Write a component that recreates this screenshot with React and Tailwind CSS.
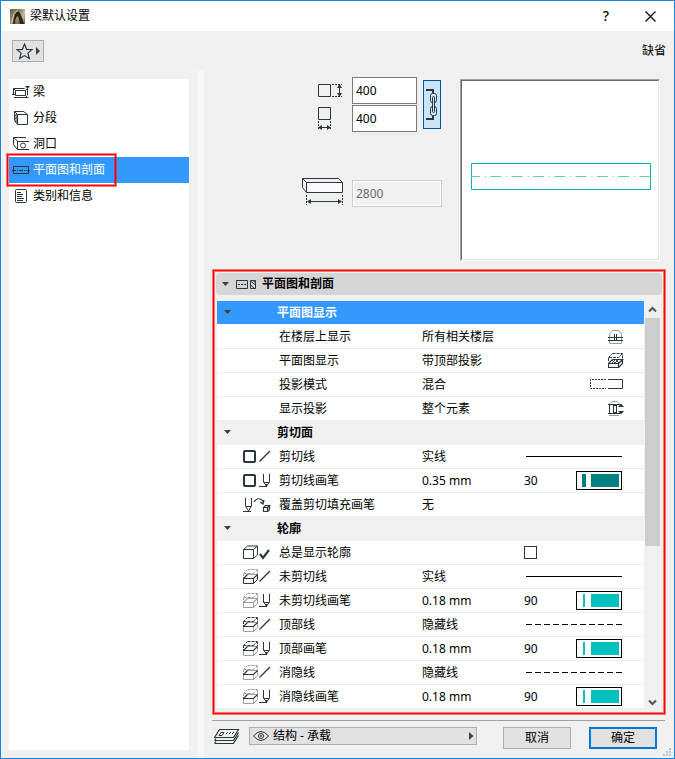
import React, { useState } from 'react'

const INK = '#2b363d'
const GREY = '#9a9fa3'

function Svg({ w, h, children, className = '' }) {
  return (
    <svg width={w} height={h} viewBox={`0 0 ${w} ${h}`} fill="none" stroke={INK} className={`block shrink-0 ${className}`} aria-hidden="true">
      {children}
    </svg>
  )
}

// ---------- title bar + toolbar ----------
function AppIcon() {
  return (
    <svg width="15" height="15" viewBox="0 0 15 15" className="block shrink-0" aria-hidden="true">
      <defs>
        <linearGradient id="appBg" x1="0" y1="0" x2="1" y2="1">
          <stop offset="0" stopColor="#6b5f48" />
          <stop offset="0.5" stopColor="#a39473" />
          <stop offset="1" stopColor="#54462f" />
        </linearGradient>
        <linearGradient id="appSky" x1="0" y1="0" x2="1" y2="1">
          <stop offset="0" stopColor="#7d7158" />
          <stop offset="0.6" stopColor="#c9bd9f" />
          <stop offset="1" stopColor="#6b5c41" />
        </linearGradient>
      </defs>
      <rect width="15" height="15" fill="url(#appBg)" />
      <path d="M9 0h6v15h-1Q12 6 9 2z" fill="url(#appSky)" />
      <path d="M3 15Q4 3 8 2Q10 2 14 15H10Q9 8 7.500 7Q5 9 5 15z" fill="#2b2418" />
      <path d="M2 14Q3 3 8 1.500" stroke="#d9cdb0" fill="none" />
    </svg>
  )
}

function StarIcon() {
  return (
    <Svg w={17} h={17}>
      <path d="M8.500 1 L10.600 6.300 L16 6.600 L11.900 10.100 L13.300 15.500 L8.500 12.600 L3.700 15.500 L5.100 10.100 L1 6.600 L6.400 6.300 Z" strokeWidth="1.200" />
    </Svg>
  )
}

// ---------- sidebar icons ----------
function BeamIcon() {
  return (
    <Svg w={18} h={14}>
      <path d="M3.500 5.500h10v5h-10zM3.500 5.500l-2-2M1.500 10V3.500h11M0 9.500h3M2 12.500h14.500M13.500 5.500l2-2v7M13.500 10.500l2 2" />
      <path d="M13 1h5l-2.500 3z" fill={INK} stroke="none" />
    </Svg>
  )
}

function SegmentIcon() {
  return (
    <Svg w={18} h={16}>
      <path d="M5.500 4.500h10v10h-10zM5.500 4.500l-3-3h9l4 3M2.500 1.500v9l3 4" />
      <path d="M2.500 4l3 3M2.500 7l3 3M2.500 10l3 3M5 4l-2.500 3M5 7l-2.500 3M5 10.500l-2 1" strokeWidth="0.900" />
    </Svg>
  )
}

function HoleIcon() {
  return (
    <Svg w={18} h={16}>
      <path d="M14 1.500H1.500v7l4 5H17M1.500 1.500l4 3.500v8.500M5.500 5.500H17" />
      <circle cx="11" cy="9.500" r="2.500" />
    </Svg>
  )
}

function PlanIcon() {
  return (
    <Svg w={18} h={8}>
      <path d="M1.500 .5h15v7h-15z" />
      <path d="M0 4.500h18" strokeDasharray="4 1 1 1" />
    </Svg>
  )
}

function DocIcon() {
  return (
    <Svg w={18} h={16}>
      <rect x="3.500" y="1.500" width="11" height="13" rx="1" />
      <path d="M5 4.500h4M5 6.500h6M5 8.500h5M5 10.500h7M5 12.500h6" />
    </Svg>
  )
}

// ---------- dimension icons ----------
function HeightIcon() {
  return (
    <Svg w={25} h={15}>
      <path d="M.5 1.500h12v12H.5z" />
      <path d="M14 1.500h10M14 13.500h10" strokeDasharray="2 1" />
      <path d="M21.500 3v9" />
      <path d="M19 5l2.500-4L24 5zM19 10l2.500 4L24 10z" fill={INK} stroke="none" />
    </Svg>
  )
}

function WidthIcon() {
  return (
    <Svg w={25} h={23}>
      <path d="M.5 .5h12v12H.5z" />
      <path d="M.5 14v9M12.500 14v9" strokeDasharray="2 1" />
      <path d="M2 20.500h9" />
      <path d="M4 18l-4 2.500L4 23zM9 18l4 2.500L9 23z" fill={INK} stroke="none" />
    </Svg>
  )
}

function LengthIcon() {
  return (
    <Svg w={42} h={31}>
      <path d="M4.500 4.500h36v10h-36z" fill="#fbfbff" />
      <path d="M4.500 4.500l-4-4h36l4 4M.5 .5v9l4 5" />
      <path d="M4.500 17v10M40.500 17v10" strokeDasharray="2 1" />
      <path d="M7 23.500h32" />
      <path d="M9 21l-4 2.500 4 2.500zM36 21l4 2.500-4 2.500z" fill={INK} stroke="none" />
    </Svg>
  )
}

function ChainIcon() {
  return (
    <Svg w={12} h={33}>
      <path d="M0 2h7v3M0 31h7v-3" strokeWidth="2" />
      <rect x="4.500" y="5.500" width="6" height="9" rx="2" />
      <rect x="4.500" y="18.500" width="6" height="9" rx="2" />
      <rect x="6.500" y="8.500" width="2" height="16" rx="1" fill="#cce4f7" />
    </Svg>
  )
}

function PreviewDrawing() {
  return (
    <svg viewBox="0 0 180 27" className="block w-full" fill="none" aria-hidden="true">
      <path d="M.5 .5h179v26H.5z" stroke="#00b8b8" />
      <path d="M0 13.500h180" stroke="#66ccb8" strokeDasharray="11 5 1 4.300" strokeDashoffset="2" />
    </svg>
  )
}

// ---------- section + row icons ----------
function SectionIcon() {
  return (
    <Svg w={21} h={10}>
      <path d="M.5 1.500h11v8H.5zM14.500 1.500h5v8h-5zM14.500 2l5 4M14.500 6l4 3.500M17 1.500l3 2.500" />
      <path d="M2 5.500h9" strokeDasharray="2 1" />
    </Svg>
  )
}

function Triangle() {
  return (
    <svg width="8" height="5" viewBox="0 0 8 5" className="block shrink-0" aria-hidden="true">
      <path d="M0 0h7L3.500 4z" fill="#404040" />
    </svg>
  )
}

function CutSquare() {
  return (
    <Svg w={15} h={15}>
      <rect x="1" y="2" width="11" height="11" rx="1" strokeWidth="2" />
    </Svg>
  )
}

function Slash() {
  return (
    <Svg w={12} h={15}>
      <path d="M.5 12.500L11 2" strokeWidth="1.200" />
    </Svg>
  )
}

function Pen() {
  return (
    <Svg w={12} h={15}>
      <path d="M0 13.500h8" />
      <path d="M4.500 1v8l3 4 3-4V1M5 9.500h5" />
      <path d="M6 11h3l-1.500 3z" fill={INK} stroke="none" />
    </Svg>
  )
}

function PenOverride() {
  return (
    <Svg w={28} h={16}>
      <path d="M0 14.500h8" />
      <path d="M2.500 1v8l3 5 3-5V1M3 9.500h5" />
      <path d="M11 5q4-6 9-1v3M17 5l3 2 1-4" strokeWidth="1.200" />
      <path d="M20.500 10.500h4v4h-4zM20.500 10.500l2-2h4l-2 2M26.500 8.500v4l-2 2" strokeWidth="1.200" />
    </Svg>
  )
}

function BoxCheck() {
  return (
    <Svg w={28} h={15}>
      <path d="M.5 4.500h10v9H.5zM.5 4.500l4-3.500h10l-4 3.500M14.500 1v9l-4 3.500" />
      <path d="M17 9l3 4 6-8" strokeWidth="2.200" />
    </Svg>
  )
}

function LayeredBox({ top = GREY, mid = GREY, low = GREY }) {
  return (
    <Svg w={15} h={16}>
      <path d="M4.500 .5h10M.5 4.500h10" stroke={top} strokeDasharray="3 1" />
      <path d="M.5 4.500l4-4M10.500 4.500l4-4v5M.5 5v4" stroke={top} strokeDasharray="2 1" />
      <path d="M4.500 5.500h10" stroke={GREY} />
      <path d="M.5 9.500v5h10v-5M14.500 5.500v5l-4 4" stroke={low} />
      <path d="M4.500 5.500l-4 4h10l4-4" stroke={mid} strokeWidth="1.200" />
    </Svg>
  )
}

function StoreyIcon() {
  return (
    <Svg w={16} h={16}>
      <path d="M1.500 14.500V5l3-3.500h6l3 3.500v9.500h-12z" stroke={GREY} />
      <path d="M0 8.500h15M0 11.500h15M6.500 5v6M8.500 5v6" />
    </Svg>
  )
}

function ProjectionIcon() {
  return (
    <Svg w={16} h={16}>
      <path d="M4.500 .5h10v6M.5 8V4.500h10l4-4M.5 4.500l4-4" strokeDasharray="3 1" />
      <path d="M.5 10.500h10v4H.5zM.5 10.500l4-4h10l-4 4M14.500 6.500v4l-4 4" strokeWidth="1.200" />
      <path d="M4 10l3-3M7 10l3-3M4 7l3 3M8 7l3 3" strokeWidth="0.900" />
    </Svg>
  )
}

function ModeIcon() {
  return (
    <Svg w={34} h={11}>
      <path d="M16 .5H.5v9H16" strokeDasharray="2 1" />
      <path d="M18 .5h14.500v9H18" />
    </Svg>
  )
}

function WholeIcon() {
  return (
    <Svg w={16} h={15}>
      <path d="M1 3.500l3-3h5l3 3M1 14.500h10" stroke={GREY} />
      <path d="M0 3.500h12M0 12.500h12M1.500 3.500v9M5.500 4v8M8.500 4v8M5 4.500h4M5 11.500h4" />
      <path d="M10 6l3-3.500L16 6zM10 10l3 3.500L16 10z" fill={INK} stroke="none" />
    </Svg>
  )
}

function LayersIcon() {
  return (
    <Svg w={26} h={16}>
      <path d="M.5 8.500L5.500 .5h19l-5 8z" strokeWidth="1.200" />
      <path d="M1 11.500h18.500l5-8M1 14.500h18.500l5-8M.5 11.500l1.500-2M.5 14.500l1.500-2" strokeWidth="1.200" />
      <path d="M7 3.500h3l-2 3H5zM12 5l2-2M15 5l2-2M18 5l2-2" />
    </Svg>
  )
}

function EyeIcon() {
  return (
    <Svg w={16} h={12}>
      <path d="M.5 6Q8-3 15.500 6Q8 15 .5 6z" />
      <circle cx="8" cy="6" r="2.500" />
      <circle cx="8" cy="6" r="0.600" />
    </Svg>
  )
}

function LineSample({ dashed }) {
  return (
    <svg width="96" height="1" viewBox="0 0 96 1" className="block shrink-0" aria-hidden="true">
      <path d="M0 .5h96" stroke="#000" strokeDasharray={dashed ? '6 3' : undefined} />
    </svg>
  )
}

function PenSwatch({ label, thick }) {
  return (
    <button type="button" aria-label={label} className="flex h-[19px] w-[46px] items-center justify-end border border-black bg-white pr-0.5">
      <span className={thick ? 'mr-[5px] h-[13px] w-1 bg-[#008080]' : 'mr-1.5 h-[13px] w-0.5 bg-[#00c0c0]'} />
      <span className={thick ? 'h-[13px] w-7 bg-[#008080]' : 'h-[13px] w-7 bg-[#00c0c0]'} />
    </button>
  )
}

const menu = [
  { name: '梁', icon: <BeamIcon /> },
  { name: '分段', icon: <SegmentIcon /> },
  { name: '洞口', icon: <HoleIcon /> },
  { name: '平面图和剖面', icon: <PlanIcon />, marked: true },
  { name: '类别和信息', icon: <DocIcon /> },
]

const groups = [
  {
    title: '平面图显示',
    selected: true,
    rows: [
      { label: '在楼层上显示', value: '所有相关楼层', end: <StoreyIcon /> },
      { label: '平面图显示', value: '带顶部投影', end: <ProjectionIcon /> },
      { label: '投影模式', value: '混合', end: <ModeIcon /> },
      { label: '显示投影', value: '整个元素', end: <WholeIcon /> },
    ],
  },
  {
    title: '剪切面',
    rows: [
      { label: '剪切线', value: '实线', icon: <><CutSquare /><Slash /></>, line: 'solid' },
      { label: '剪切线画笔', value: '0.35 mm', icon: <><CutSquare /><Pen /></>, pen: 30 },
      { label: '覆盖剪切填充画笔', value: '无', icon: <PenOverride /> },
    ],
  },
  {
    title: '轮廓',
    rows: [
      { label: '总是显示轮廓', value: '', icon: <BoxCheck />, check: true },
      { label: '未剪切线', value: '实线', icon: <><LayeredBox mid={INK} low={INK} /><Slash /></>, line: 'solid' },
      { label: '未剪切线画笔', value: '0.18 mm', icon: <><LayeredBox /><Pen /></>, pen: 90 },
      { label: '顶部线', value: '隐藏线', icon: <><LayeredBox top={INK} mid={INK} /><Slash /></>, line: 'dashed' },
      { label: '顶部画笔', value: '0.18 mm', icon: <><LayeredBox top={INK} mid={INK} /><Pen /></>, pen: 90 },
      { label: '消隐线', value: '隐藏线', icon: <><LayeredBox mid={INK} /><Slash /></>, line: 'dashed' },
      { label: '消隐线画笔', value: '0.18 mm', icon: <><LayeredBox mid={INK} /><Pen /></>, pen: 90 },
    ],
  },
]

function PropertyRow({ row, id }) {
  const [checked, setChecked] = useState(false)

  return (
    <tr className="h-6 bg-white">
      <td className="border-b border-[#ededed] p-0 pl-[26px]">
        <div className="flex items-center gap-px">{row.icon}</div>
      </td>
      <th scope="row" className="border-b border-[#ededed] p-0 pl-0.5 text-left font-normal">
        {row.check ? <label htmlFor={id}>{row.label}</label> : row.label}
      </th>
      <td className="border-b border-[#ededed] p-0">{row.value}</td>
      <td className={row.end ? 'border-b border-[#ededed] p-0 pr-5' : 'border-b border-[#ededed] p-0 pr-[22px]'}>
        <div className="flex items-center justify-between">
          {row.check && (
            <input
              id={id}
              type="checkbox"
              checked={checked}
              onChange={(e) => setChecked(e.target.checked)}
              className="size-[13px] appearance-none border border-[#2b363d] bg-white checked:bg-[#2b363d]"
            />
          )}
          {row.pen && <span>{row.pen}</span>}
          {row.pen && <PenSwatch label={`${row.label} ${row.pen}`} thick={row.pen === 30} />}
          {row.line && <span className="ml-auto"><LineSample dashed={row.line === 'dashed'} /></span>}
          {row.end && <span className="ml-auto">{row.end}</span>}
        </div>
      </td>
    </tr>
  )
}

function Sidebar() {
  const [active, setActive] = useState('平面图和剖面')

  return (
    <nav className="my-2 ml-2 mr-2 w-[180px] shrink-0 bg-white">
      {menu.map((item) => (
        <button
          key={item.name}
          type="button"
          onClick={() => setActive(item.name)}
          className={`relative flex h-[26px] w-full items-center gap-[3px] pl-[3px] text-left ${active === item.name ? 'bg-[#3399ff] text-white' : 'text-black'}`}
        >
          {item.icon}
          <span>{item.name}</span>
          {item.marked && (
            <span className="pointer-events-none absolute -inset-y-[3px] -left-0.5 w-[109px] border border-[#ff0000] shadow-[0_0_0_1px_#ff000080,inset_0_0_0_1px_#ff000080]" />
          )}
        </button>
      ))}
    </nav>
  )
}

function SizePanel() {
  const [height, setHeight] = useState('400')
  const [width, setWidth] = useState('400')

  return (
    <div className="flex items-start justify-end gap-[18px] pb-[9px] pr-3.5 pt-1.5">
      <div className="flex flex-col gap-[46px]">
        <div className="flex items-center gap-1.5">
          <div className="flex flex-col gap-px">
            <div className="flex h-[27px] items-center">
              <label htmlFor="beam-height" aria-label="高度" className="w-[50px] pl-4"><HeightIcon /></label>
              <input id="beam-height" value={height} onChange={(e) => setHeight(e.target.value)} className="h-[27px] w-[65px] border border-[#7a7a7a] bg-white px-[3px] outline-none" />
            </div>
            <div className="flex h-[27px] items-center">
              <label htmlFor="beam-width" aria-label="宽度" className="w-[50px] pl-4"><WidthIcon /></label>
              <input id="beam-width" value={width} onChange={(e) => setWidth(e.target.value)} className="h-[27px] w-[65px] border border-[#7a7a7a] bg-white px-[3px] outline-none" />
            </div>
          </div>
          <button type="button" aria-label="链接" aria-pressed="true" className="flex h-[49px] w-[18px] items-center justify-center border border-[#005499] bg-[#cce4f7]">
            <ChainIcon />
          </button>
        </div>
        <div className="flex items-center">
          <label htmlFor="beam-length" aria-label="长度" className="w-[50px]"><LengthIcon /></label>
          <input id="beam-length" value="2800" disabled className="h-[27px] w-[90px] border border-[#cccccc] bg-[#f0f0f0] px-[3px] text-[#6d6d6d] shadow-[inset_0_0_0_1px_#fff]" />
        </div>
      </div>
      <div className="mt-0.5 flex h-[182px] w-[200px] flex-col justify-center border border-b-white border-l-[#a0a0a0] border-r-white border-t-[#a0a0a0]">
        <div className="flex h-full flex-col justify-center border border-b-[#e3e3e3] border-l-[#696969] border-r-[#e3e3e3] border-t-[#696969] bg-white pl-[9px] pr-[7px] pt-[13px]">
          <PreviewDrawing />
        </div>
      </div>
    </div>
  )
}

function PropertyPanel() {
  return (
    <section className="mx-[9px] border border-[#ff0000] p-0.5 pb-1 shadow-[0_0_0_1px_#ff000080,inset_0_0_0_1px_#ff000080]">
      <h2 className="flex h-[22px] items-center rounded-sm bg-[#d5d5d5] pl-1.5 font-bold">
        <Triangle />
        <span className="ml-1.5 mr-[5px]"><SectionIcon /></span>
        平面图和剖面
      </h2>
      <div className="ml-px mr-0.5 mt-1.5 flex gap-px">
        <table className="min-w-0 flex-1 table-fixed border-separate border-spacing-0">
          <colgroup>
            <col className="w-[60px]" />
            <col className="w-[145px]" />
            <col className="w-[102px]" />
            <col />
          </colgroup>
          {groups.map((group, g) => (
            <tbody key={group.title}>
              <tr className={group.selected ? 'h-6 bg-[#3399ff] text-white' : 'h-6 bg-[#f0f0f0]'}>
                <td className={group.selected ? 'border-b border-white p-0 pl-[7px]' : 'border-b border-[#f0f0f0] p-0 pl-[7px]'}>
                  <Triangle />
                </td>
                <th colSpan={3} className={group.selected ? 'border-b border-white p-0 text-left font-bold' : 'border-b border-[#f0f0f0] p-0 text-left font-bold'}>
                  {group.title}
                </th>
              </tr>
              {group.rows.map((row, r) => (
                <PropertyRow key={row.label} row={row} id={`prop-${g}-${r}`} />
              ))}
            </tbody>
          ))}
        </table>
        <div className="flex w-[15px] shrink-0 flex-col bg-[#f0f0f0]">
          <button type="button" aria-label="向上滚动" className="flex h-[17px] items-center justify-center">
            <svg width="9" height="7" viewBox="0 0 9 7" fill="none"><path d="M1 5.500L4.500 2 8 5.500" stroke="#555" strokeWidth="2" /></svg>
          </button>
          <div className="flex-1">
            <div className="h-[228px] bg-[#cdcdcd]" />
          </div>
          <button type="button" aria-label="向下滚动" className="flex h-[13px] items-center justify-center">
            <svg width="9" height="7" viewBox="0 0 9 7" fill="none"><path d="M1 1.500L4.500 5 8 1.500" stroke="#555" strokeWidth="2" /></svg>
          </button>
        </div>
      </div>
    </section>
  )
}

function Footer() {
  return (
    <footer className="ml-2 mr-[9px] mt-1.5 flex items-start border-t border-[#a0a0a0] pb-[9px] pl-0.5 pr-2 pt-1.5">
      <div className="mr-[9px] mt-0.5"><LayersIcon /></div>
      <div className="relative mr-[26px] h-[18px] flex-1">
        <select aria-label="图层" className="block h-[18px] w-full appearance-none border border-[#adadad] bg-[#e1e1e1] pl-[23px] pr-4 leading-4 outline-none">
          <option>结构 - 承载</option>
        </select>
        <span className="pointer-events-none absolute left-1 top-[3px]"><EyeIcon /></span>
        <svg width="5" height="8" viewBox="0 0 5 8" className="pointer-events-none absolute right-[3px] top-[5px]" aria-hidden="true">
          <path d="M0 0v8l4.500-4z" fill="#404040" />
        </svg>
      </div>
      <button type="button" className="mr-[18px] h-[22px] w-[68px] border border-[#adadad] bg-[#e1e1e1] leading-5">取消</button>
      <button type="button" className="h-[22px] w-[68px] border-2 border-[#0078d7] bg-[#e1e1e1] leading-[18px]">确定</button>
    </footer>
  )
}

export default function App() {
  return (
    <div className="relative flex min-h-screen flex-col border border-[#1883d7] bg-[#f0f0f0] font-['Noto_Sans','Noto_Sans_CJK_SC',sans-serif] text-[12px] leading-[18px] text-black">
      <header className="flex h-[30px] items-center bg-white pl-[9px] pr-[18px]">
        <AppIcon />
        <h1 className="ml-[5px] flex-1">梁默认设置</h1>
        <button type="button" aria-label="帮助" className="mr-9 text-[14px] font-medium">?</button>
        <button type="button" aria-label="关闭">
          <svg width="11" height="11" viewBox="0 0 11 11" className="block"><path d="M.5 .5l10 10M10.500 .5l-10 10" stroke="#000" strokeWidth="1.200" /></svg>
        </button>
      </header>

      <div className="flex h-10 items-center justify-between pl-[11px] pr-2">
        <button type="button" aria-label="收藏夹" className="flex h-[22px] w-8 items-center gap-[3px] border border-[#adadad] bg-[#e1e1e1] pl-[3px]">
          <StarIcon />
          <svg width="4" height="8" viewBox="0 0 4 8"><path d="M0 0v8l4-4z" fill="#404040" /></svg>
        </button>
        <span>缺省</span>
      </div>

      <div className="flex flex-1">
        <Sidebar />
        <div className="w-[7px] shrink-0 bg-[#f7f7f7]" />
        <main className="min-w-0 flex-1">
          <SizePanel />
          <PropertyPanel />
          <Footer />
        </main>
      </div>

      <svg width="8" height="8" viewBox="0 0 8 8" className="absolute bottom-0.5 right-[3px]" aria-hidden="true">
        <path d="M6 0h2v2H6zM3 3h2v2H3zM6 3h2v2H6zM0 6h2v2H0zM3 6h2v2H3zM6 6h2v2H6z" fill="#bfbfbf" />
      </svg>
    </div>
  )
}
